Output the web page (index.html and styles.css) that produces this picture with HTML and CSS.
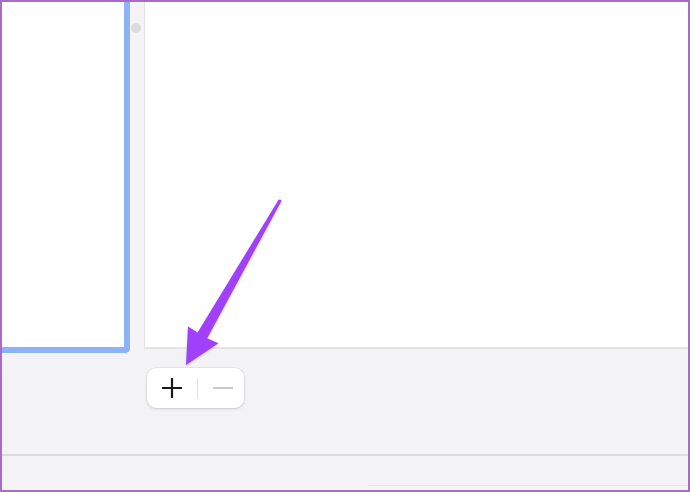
FILE: index.html
```html
<!DOCTYPE html>
<html>
<head>
<meta charset="utf-8">
<link rel="stylesheet" href="styles.css">
</head>
<body>
<div class="frame">
  <div class="top">
    <div class="left-panel"></div>
    <div class="gutter"><span class="dot"></span></div>
    <div class="right-panel"></div>
  </div>
  <div class="toolbar">
    <div class="btn-group">
      <span class="btn plus">
        <svg width="22" height="22" viewBox="0 0 22 22"><path d="M11 1V21M1 11H21" stroke="#1a1a1a" stroke-width="2.2" fill="none"/></svg>
      </span>
      <span class="sep"></span>
      <span class="btn minus">
        <svg width="22" height="22" viewBox="0 0 22 22"><path d="M1 11H21" stroke="#bdbdbd" stroke-width="1.6" fill="none"/></svg>
      </span>
    </div>
  </div>
  <div class="rule"></div>
  <div class="rule-faint"></div>
  <svg class="arrow" width="690" height="492" viewBox="0 0 690 492">
    <defs>
      <filter id="sh" x="-20%" y="-20%" width="140%" height="140%">
        <feDropShadow dx="0" dy="1" stdDeviation="1.2" flood-color="#000" flood-opacity="0.22"/>
      </filter>
    </defs>
    <path filter="url(#sh)" fill="#a041fb" d="M278.3 200.2 Q280 198.6 281.6 200.8 L207.2 338.2 L218.5 343.2 L186 365 L188 326.5 L197.6 332.4 Z"/>
  </svg>
</div>
</body>
</html>
```

FILE: styles.css
```css
html, body {
  margin: 0;
  padding: 0;
}
body {
  font-family: "Liberation Sans", Arial, sans-serif;
  background: #f3f3f5;
}
.frame {
  position: relative;
  width: 690px;
  height: 492px;
  box-sizing: border-box;
  border: 2px solid #a66cc6;
  background: #f3f3f5;
  display: flex;
  flex-direction: column;
  overflow: hidden;
}
.top {
  display: flex;
  height: 351px;
  flex: none;
}
.left-panel {
  width: 128px;
  height: 351px;
  box-sizing: border-box;
  background: #ffffff;
  border-right: 6px solid #8db3f7;
  border-bottom: 6px solid #8db3f7;
  border-bottom-right-radius: 5px;
}
.gutter {
  width: 14px;
  box-sizing: border-box;
  padding-top: 21px;
  padding-left: 1px;
  background: #f4f4f6;
}
.dot {
  display: block;
  width: 10px;
  height: 10px;
  border-radius: 50%;
  background: #dcdcdf;
}
.right-panel {
  flex: 1;
  height: 347px;
  box-sizing: border-box;
  background: #ffffff;
  border-left: 1px solid #e2e2e4;
  border-bottom: 2px solid #e3e3e5;
}
.toolbar {
  display: flex;
  padding-left: 145px;
  margin-top: 15px;
  flex: none;
}
.btn-group {
  width: 97px;
  height: 40px;
  box-sizing: border-box;
  background: #ffffff;
  border-radius: 9px;
  box-shadow: 0 0 0 0.5px rgba(0,0,0,0.08), 0 1px 3px rgba(0,0,0,0.14);
  display: flex;
  align-items: center;
  padding-left: 14px;
}
.btn {
  display: flex;
  align-items: center;
  justify-content: center;
  width: 22px;
  height: 22px;
}
.sep {
  width: 1px;
  height: 21px;
  background: #e0e0e2;
  margin-left: 14px;
  margin-right: 14px;
}
.rule {
  margin-top: 46px;
  height: 2px;
  background: #dcdcde;
  flex: none;
}
.rule-faint {
  margin-top: 29px;
  margin-left: 366px;
  height: 1px;
  background: #e8e8ea;
  flex: none;
}
.arrow {
  position: absolute;
  left: -2px;
  top: -2px;
  pointer-events: none;
}
```
